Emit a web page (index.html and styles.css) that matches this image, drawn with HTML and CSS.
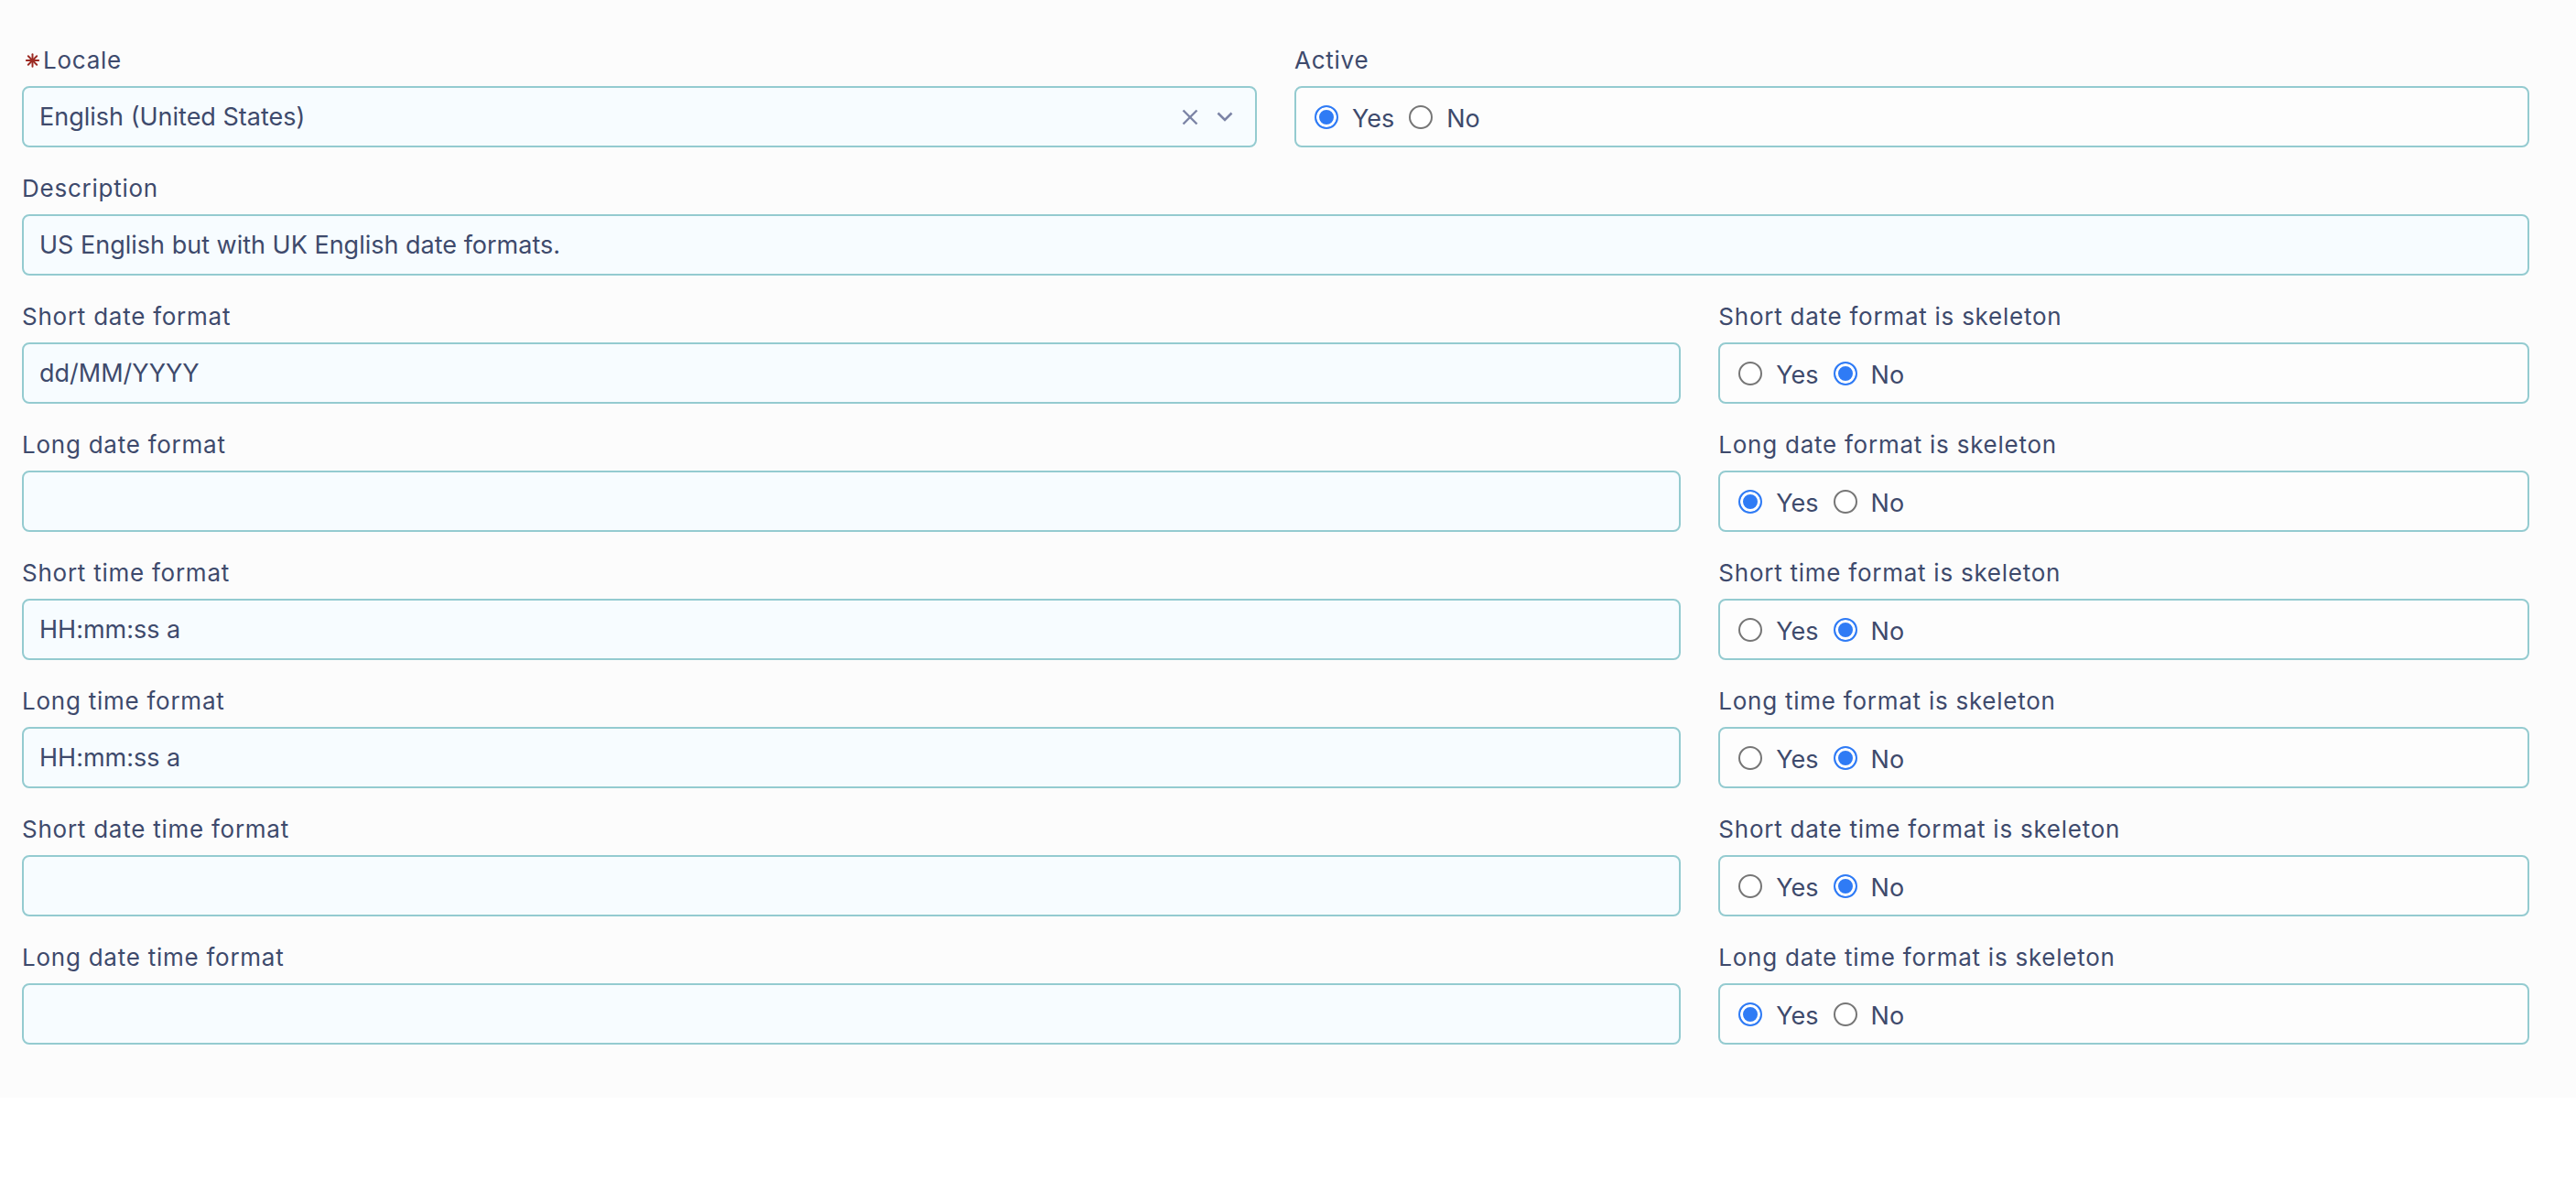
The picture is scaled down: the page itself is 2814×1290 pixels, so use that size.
FILE: index.html
```html
<!DOCTYPE html>
<html lang="en">
<head>
<meta charset="utf-8">
<title>Locale</title>
<link rel="stylesheet" href="styles.css">
</head>
<body>
<div class="panel">
  <form class="grid">
    <div class="field span-6">
      <label class="lbl"><svg class="req" viewBox="0 0 18 18" width="17" height="16"><g stroke="#9c2b23" stroke-width="2.2" stroke-linecap="round"><line x1="9" y1="1.5" x2="9" y2="16.5"/><line x1="1.5" y1="9" x2="16.5" y2="9"/><line x1="3.7" y1="3.7" x2="14.3" y2="14.3"/><line x1="14.3" y1="3.7" x2="3.7" y2="14.3"/></g></svg>Locale</label>
      <div class="box input select">
        <span class="val">English (United States)</span>
        <svg class="ico-x" viewBox="0 0 18 18" width="18" height="18"><g stroke="#7c84a6" stroke-width="2.4" stroke-linecap="butt"><line x1="1.5" y1="1.5" x2="16.5" y2="16.5"/><line x1="16.5" y1="1.5" x2="1.5" y2="16.5"/></g></svg>
        <svg class="ico-chev" viewBox="0 0 18 11" width="18" height="11"><polyline points="1.5,1.5 9,9 16.5,1.5" fill="none" stroke="#7c84a6" stroke-width="2.6"/></svg>
      </div>
    </div>
    <div class="field span-6">
      <label class="lbl">Active</label>
      <div class="box radios">
        <label class="opt"><input type="radio" name="active" checked><span>Yes</span></label>
        <label class="opt"><input type="radio" name="active"><span>No</span></label>
      </div>
    </div>

    <div class="field span-12">
      <label class="lbl">Description</label>
      <div class="box input"><span class="val">US English but with UK English date formats.</span></div>
    </div>

    <div class="field span-8">
      <label class="lbl">Short date format</label>
      <div class="box input"><span class="val">dd/MM/YYYY</span></div>
    </div>
    <div class="field span-4">
      <label class="lbl">Short date format is skeleton</label>
      <div class="box radios">
        <label class="opt"><input type="radio" name="sdf"><span>Yes</span></label>
        <label class="opt"><input type="radio" name="sdf" checked><span>No</span></label>
      </div>
    </div>

    <div class="field span-8">
      <label class="lbl">Long date format</label>
      <div class="box input"><span class="val"></span></div>
    </div>
    <div class="field span-4">
      <label class="lbl">Long date format is skeleton</label>
      <div class="box radios">
        <label class="opt"><input type="radio" name="ldf" checked><span>Yes</span></label>
        <label class="opt"><input type="radio" name="ldf"><span>No</span></label>
      </div>
    </div>

    <div class="field span-8">
      <label class="lbl">Short time format</label>
      <div class="box input"><span class="val">HH:mm:ss a</span></div>
    </div>
    <div class="field span-4">
      <label class="lbl">Short time format is skeleton</label>
      <div class="box radios">
        <label class="opt"><input type="radio" name="stf"><span>Yes</span></label>
        <label class="opt"><input type="radio" name="stf" checked><span>No</span></label>
      </div>
    </div>

    <div class="field span-8">
      <label class="lbl">Long time format</label>
      <div class="box input"><span class="val">HH:mm:ss a</span></div>
    </div>
    <div class="field span-4">
      <label class="lbl">Long time format is skeleton</label>
      <div class="box radios">
        <label class="opt"><input type="radio" name="ltf"><span>Yes</span></label>
        <label class="opt"><input type="radio" name="ltf" checked><span>No</span></label>
      </div>
    </div>

    <div class="field span-8">
      <label class="lbl">Short date time format</label>
      <div class="box input"><span class="val"></span></div>
    </div>
    <div class="field span-4">
      <label class="lbl">Short date time format is skeleton</label>
      <div class="box radios">
        <label class="opt"><input type="radio" name="sdtf"><span>Yes</span></label>
        <label class="opt"><input type="radio" name="sdtf" checked><span>No</span></label>
      </div>
    </div>

    <div class="field span-8">
      <label class="lbl">Long date time format</label>
      <div class="box input"><span class="val"></span></div>
    </div>
    <div class="field span-4">
      <label class="lbl">Long date time format is skeleton</label>
      <div class="box radios">
        <label class="opt"><input type="radio" name="ldtf" checked><span>Yes</span></label>
        <label class="opt"><input type="radio" name="ldtf"><span>No</span></label>
      </div>
    </div>
  </form>
</div>
</body>
</html>
```

FILE: styles.css
```css
html, body {
  margin: 0;
  padding: 0;
  background: #ffffff;
}

body {
  font-family: Inter, "Noto Sans", "Liberation Sans", sans-serif;
  color: #3e4a6c;
}

.panel {
  background: #fcfcfc;
  padding: 46px 51px 58px 24px;
}

.grid {
  display: grid;
  grid-template-columns: repeat(12, 1fr);
  column-gap: 41px;
  row-gap: 25px;
  margin: 0;
}

.span-4 { grid-column: span 4; }
.span-6 { grid-column: span 6; }
.span-8 { grid-column: span 8; }
.span-12 { grid-column: span 12; }

.field {
  display: flex;
  flex-direction: column;
  min-width: 0;
}

.lbl {
  display: flex;
  align-items: center;
  height: 40px;
  margin-bottom: 8px;
  font-size: 26px;
  letter-spacing: 0.75px;
  line-height: 40px;
  color: #3e4a6c;
  white-space: nowrap;
}

.req {
  margin-left: 3px;
  margin-right: 3px;
  flex: none;
}

.box {
  box-sizing: border-box;
  height: 67px;
  border: 2px solid #94cbd0;
  border-radius: 8px;
  display: flex;
  align-items: center;
}

.input {
  background: #f7fcff;
  padding: 0 24px 0 17px;
  font-size: 27px;
}

.val {
  flex: 1;
  white-space: nowrap;
  overflow: hidden;
}

.ico-x {
  flex: none;
  margin-right: 20px;
}

.ico-chev {
  flex: none;
}

.radios {
  background: #fdfdfd;
  padding: 0 20px;
  font-size: 27px;
}

.opt {
  display: flex;
  align-items: center;
  margin-right: 16px;
}

.opt span {
  padding-top: 4px;
}

.opt input {
  appearance: none;
  -webkit-appearance: none;
  box-sizing: border-box;
  width: 26px;
  height: 26px;
  margin: 0 15px 0 0;
  border: 2px solid #767676;
  border-radius: 50%;
  background: #ffffff;
  flex: none;
}

.opt input:checked {
  border: 2.5px solid #2f7bf5;
  background: #2f7bf5;
  box-shadow: inset 0 0 0 3px #ffffff;
}
```
